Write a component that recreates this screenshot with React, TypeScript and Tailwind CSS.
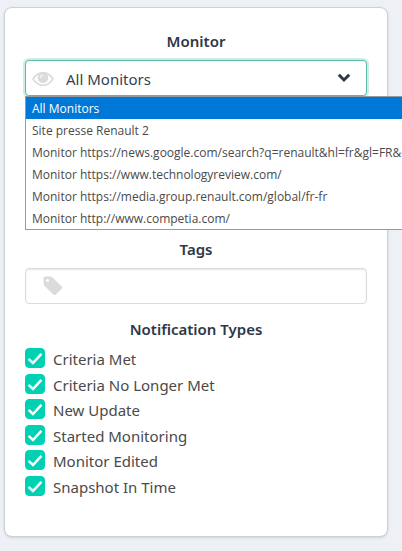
import React, { useState } from "react";

const monitors = [
  "All Monitors",
  "Site presse Renault 2",
  "Monitor https://news.google.com/search?q=renault&hl=fr&gl=FR&ceid=FR:fr",
  "Monitor https://www.technologyreview.com/",
  "Monitor https://media.group.renault.com/global/fr-fr",
  "Monitor http://www.competia.com/"
];

const notificationTypes = [
  "Criteria Met",
  "Criteria No Longer Met",
  "New Update",
  "Started Monitoring",
  "Monitor Edited",
  "Snapshot In Time"
];

const EyeIcon = () => (
  <svg viewBox="0 0 22 22" className="w-[22px] h-[22px]" fill="none" stroke="currentColor" aria-hidden="true">
    <path d="M1 11Q5 4.6 11 4.6T21 11Q17 17.2 11 17.2T1 11Z" strokeWidth="1.6" />
    <circle cx="11" cy="9.8" r="5.3" fill="currentColor" stroke="none" />
    <path d="M8.2 9.6Q8.2 7 10.8 7" stroke="#fff" strokeWidth="1" strokeLinecap="round" />
  </svg>
);

const TagIcon = () => (
  <svg viewBox="0 0 1792 1792" className="w-[22px] h-[22px]" fill="currentColor" aria-hidden="true">
    <path d="M576 448q0-53-37.5-90.5t-90.5-37.5-90.5 37.5-37.5 90.5 37.5 90.5 90.5 37.5 90.5-37.5 37.5-90.5zm1067 576q0 53-37 90l-491 492q-39 37-91 37-53 0-90-37l-715-716q-38-37-64.5-101t-26.5-117v-416q0-52 38-90t90-38h416q53 0 117 26.5t102 64.5l715 714q37 39 37 91z" />
  </svg>
);

const ChevronIcon = () => (
  <svg viewBox="0 0 14 10" className="w-[14px] h-[10px]" fill="none" stroke="currentColor" strokeWidth="3" aria-hidden="true">
    <path d="M1.8 1.8L7 7L12.2 1.8" />
  </svg>
);

const CheckIcon = () => (
  <svg
    viewBox="0 0 20 20"
    className="absolute inset-0 w-5 h-5 pointer-events-none"
    fill="none"
    stroke="#fff"
    strokeWidth="2.5"
    aria-hidden="true"
  >
    <path d="M3.6 10.8L8 15L16.4 5.8" />
  </svg>
);

interface CheckRowProps {
  id: string;
  label: string;
}

const CheckRow: React.FC<CheckRowProps> = ({ id, label }) => (
  <div className="flex items-center gap-2 h-5">
    <span className="relative w-5 h-5 shrink-0">
      <input
        id={id}
        type="checkbox"
        defaultChecked
        className="block appearance-none w-5 h-5 rounded bg-white border border-[#dbdbdb] checked:bg-[#00d1b2] checked:border-[#00d1b2]"
      />
      <CheckIcon />
    </span>
    <label htmlFor={id} className="pt-[2px] text-[#4a4a4a] leading-6 whitespace-nowrap">
      {label}
    </label>
  </div>
);

export default function App() {
  const [monitor, setMonitor] = useState(monitors[0]);

  return (
    <div className="min-h-screen overflow-hidden bg-[#edf1f5] pt-[7px] pl-1 pr-[14px] pb-[13px] font-['Noto_Sans',sans-serif] text-[15px] text-[#363636]">
      <main className="rounded-lg border border-[#cdd1d5] bg-white px-5 pt-[22px] pb-10 shadow-sm">
        <label htmlFor="monitor" className="block text-center font-semibold leading-[22px] mb-2 text-[#2e3748]">
          Monitor
        </label>
        <div className="relative mb-[142px]">
          <select
            id="monitor"
            value={monitor}
            onChange={(e) => setMonitor(e.target.value)}
            className="block w-full h-9 appearance-none rounded border border-[#5cb8a6] bg-white pt-[2px] pl-10 pr-10 text-[15px] text-[#363f4f] outline-none ring-2 ring-[#cdeee6]"
          >
            {monitors.map((m) => (
              <option key={m}>{m}</option>
            ))}
          </select>
          <span className="absolute left-[7px] top-2 text-[#dbdbdb] pointer-events-none">
            <EyeIcon />
          </span>
          <span className="absolute right-4 top-[13px] text-[#2e3748] pointer-events-none">
            <ChevronIcon />
          </span>
          <ul
            role="listbox"
            aria-label="Monitor"
            className="absolute left-0 top-full z-10 w-max border border-[#999] bg-white font-['Open_Sans',sans-serif] text-[12px] leading-5 text-[#4a4a4a]"
          >
            {monitors.map((m) => (
              <li
                key={m}
                role="option"
                aria-selected={m === monitor}
                onClick={() => setMonitor(m)}
                className="px-[6px] pt-[2px] whitespace-nowrap aria-selected:bg-[#0078d7] aria-selected:text-white"
              >
                {m}
              </li>
            ))}
          </ul>
        </div>

        <label htmlFor="tags" className="block text-center font-semibold leading-[22px] mb-2 text-[#2e3748]">
          Tags
        </label>
        <div className="relative mb-[14px]">
          <input
            id="tags"
            type="text"
            className="block w-full h-9 rounded border border-[#dbdbdb] bg-white pl-12 pr-3 shadow-[inset_0_1px_2px_rgba(10,10,10,0.1)] outline-none"
          />
          <span className="absolute left-[17px] top-[7px] text-[#dbdbdb] pointer-events-none">
            <TagIcon />
          </span>
        </div>

        <fieldset>
          <legend className="w-full text-center font-semibold leading-[22px] mb-2 text-[#2e3748]">
            Notification Types
          </legend>
          <div className="flex flex-col justify-between h-[148px]">
            {notificationTypes.map((type) => (
              <CheckRow key={type} id={type.toLowerCase().replace(/ /g, "-")} label={type} />
            ))}
          </div>
        </fieldset>
      </main>
    </div>
  );
}
